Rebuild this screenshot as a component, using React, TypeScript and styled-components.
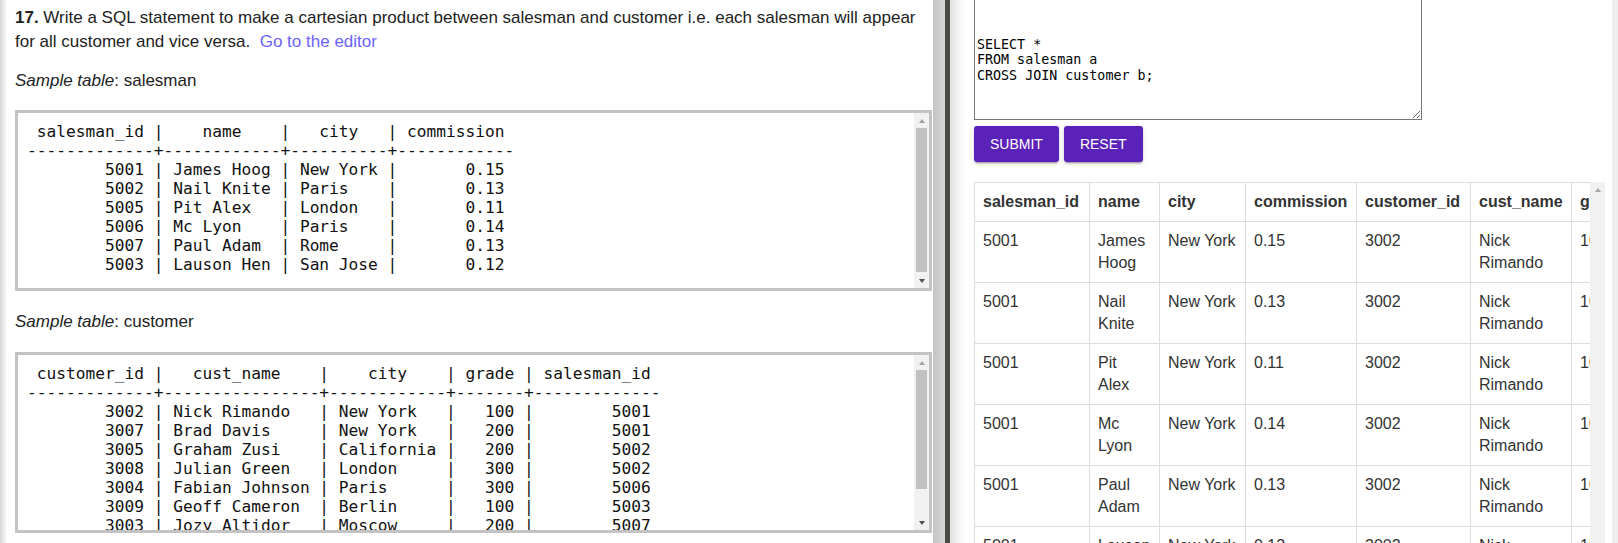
import React from 'react';
import styled, { createGlobalStyle } from 'styled-components';

const GlobalStyle = createGlobalStyle`
  html, body {
    margin: 0;
    padding: 0;
    background: #fff;
    overflow: hidden;
  }
  body {
    font-family: "Liberation Sans", Arial, sans-serif;
  }
`;

const Page = styled.div`
  display: flex;
  width: 1618px;
  height: 543px;
  overflow: hidden;
`;

/* ---------- left: exercise text ---------- */

const LeftPanel = styled.section`
  flex: 0 0 933px;
  box-sizing: border-box;
  padding: 6px 1px 0 15px;
  background: linear-gradient(to right, #d6d6d6 0, #ececec 4px, #ffffff 7px);
  color: #222;
  font-size: 17px;
  line-height: 24px;
  overflow: hidden;
`;

const Paragraph = styled.p<{ $top: number }>`
  margin: ${(p) => p.$top}px 0 0;
`;

const Strong = styled.strong`
  font-weight: 700;
`;

const EditorLink = styled.a`
  color: #6c63ff;
  text-decoration: none;
`;

const CodeBox = styled.div<{ $top: number }>`
  margin-top: ${(p) => p.$top}px;
  height: 181px;
  box-sizing: border-box;
  border: 3px solid #c3c3c3;
  background: #fff;
  display: flex;
`;

const CodeText = styled.pre`
  flex: 1;
  min-width: 0;
  margin: 0;
  padding: 9px 9px 0;
  overflow: hidden;
  font-family: "DejaVu Sans Mono", monospace;
  font-size: 16.2px;
  line-height: 19px;
  color: #111;
  white-space: pre;
`;

/* ---------- drawn classic scrollbar ---------- */

const ScrollBar = styled.div`
  flex: 0 0 15px;
  display: flex;
  flex-direction: column;
  background: #f1f1f1;
`;

const ScrollButton = styled.div`
  flex: 0 0 15px;
  display: flex;
  align-items: center;
  justify-content: center;
`;

const Arrow = styled.span<{ $dir: 'up' | 'down'; $dim?: boolean }>`
  width: 0;
  height: 0;
  border-left: 3.5px solid transparent;
  border-right: 3.5px solid transparent;
  ${(p) =>
    p.$dir === 'up'
      ? `border-bottom: 4px solid ${p.$dim ? '#a3a3a3' : '#505050'};`
      : `border-top: 4px solid ${p.$dim ? '#a3a3a3' : '#505050'};`}
`;

const ScrollTrack = styled.div`
  flex: 1;
  min-height: 0;
  padding: 0 2px;
  display: flex;
  flex-direction: column;
`;

const Thumb = styled.div<{ $ratio: number }>`
  height: ${(p) => p.$ratio * 100}%;
  background: #c1c1c1;
`;

function FakeScrollbar({ ratio, showDown = true }: { ratio: number; showDown?: boolean }) {
  return (
    <ScrollBar>
      <ScrollButton>
        <Arrow $dir="up" $dim />
      </ScrollButton>
      <ScrollTrack>{ratio > 0 && <Thumb $ratio={ratio} />}</ScrollTrack>
      {showDown && (
        <ScrollButton>
          <Arrow $dir="down" />
        </ScrollButton>
      )}
    </ScrollBar>
  );
}

/* ---------- splitter ---------- */

const Splitter = styled.div`
  flex: 0 0 17px;
  background: linear-gradient(
    to right,
    #c4c4c4 0,
    #d6d6d6 12px,
    #4b4b46 12px,
    #4b4b46 17px
  );
`;

/* ---------- right: editor + result ---------- */

const RightPanel = styled.section`
  flex: 1;
  min-width: 0;
  display: flex;
  background: linear-gradient(to right, #e2e2e2 0, #f5f5f5 9px, #ffffff 16px);
`;

const RightContent = styled.div`
  flex: 1;
  min-width: 0;
  padding: 0 7px 0 24px;
  display: flex;
  flex-direction: column;
  overflow: hidden;
`;

const RightEdge = styled.div`
  flex: 0 0 6px;
  background: #eeeeee;
`;

const Editor = styled.textarea`
  display: block;
  flex: 0 0 auto;
  width: 448px;
  height: 120px;
  box-sizing: border-box;
  margin: 0;
  border: 1px solid #767676;
  border-top: none;
  padding: 36.5px 2px 2px;
  font-family: "DejaVu Sans Mono", monospace;
  font-size: 13.33px;
  line-height: 15.5px;
  color: #000;
  background: #fff;
  outline: none;
  resize: both;
`;

const ButtonRow = styled.div`
  flex: 0 0 auto;
  display: flex;
  gap: 5px;
  margin-top: 6px;
`;

const ActionButton = styled.button`
  height: 36px;
  padding: 0 16px;
  border: none;
  border-radius: 3px;
  background: #5a22b8;
  color: #fff;
  font-family: "Liberation Sans", Arial, sans-serif;
  font-size: 14px;
  text-transform: uppercase;
  box-shadow: 0 2px 2px 0 rgba(0, 0, 0, 0.14), 0 3px 1px -2px rgba(0, 0, 0, 0.2),
    0 1px 5px 0 rgba(0, 0, 0, 0.12);
  cursor: pointer;
`;

const ResultBox = styled.div`
  margin-top: 20px;
  height: 620px;
  flex: 0 0 auto;
  display: flex;
`;

const ResultViewport = styled.div`
  flex: 1;
  min-width: 0;
  overflow: hidden;
`;

const ResultTable = styled.table`
  border-collapse: collapse;
  table-layout: fixed;
  width: 817px;
  font-family: "Liberation Sans", Arial, sans-serif;
  font-size: 16px;
  line-height: 22px;
  color: #333;
  border: 1px solid #ddd;
`;

const Col = styled.col<{ $w: number }>`
  width: ${(p) => p.$w}px;
`;

const HeadCell = styled.th`
  border: 1px solid #ddd;
  padding: 8px;
  text-align: left;
  vertical-align: bottom;
  font-weight: 700;
  white-space: nowrap;
  overflow: hidden;
`;

const Cell = styled.td<{ $nowrap?: boolean }>`
  border: 1px solid #ddd;
  padding: 8px;
  text-align: left;
  vertical-align: top;
  ${(p) => (p.$nowrap ? 'white-space: nowrap;' : '')}
`;

const salesmanTable = ` salesman_id |    name    |   city   | commission 
-------------+------------+----------+------------
        5001 | James Hoog | New York |       0.15
        5002 | Nail Knite | Paris    |       0.13
        5005 | Pit Alex   | London   |       0.11
        5006 | Mc Lyon    | Paris    |       0.14
        5007 | Paul Adam  | Rome     |       0.13
        5003 | Lauson Hen | San Jose |       0.12`;

const customerTable = ` customer_id |   cust_name    |    city    | grade | salesman_id 
-------------+----------------+------------+-------+-------------
        3002 | Nick Rimando   | New York   |   100 |        5001
        3007 | Brad Davis     | New York   |   200 |        5001
        3005 | Graham Zusi    | California |   200 |        5002
        3008 | Julian Green   | London     |   300 |        5002
        3004 | Fabian Johnson | Paris      |   300 |        5006
        3009 | Geoff Cameron  | Berlin     |   100 |        5003
        3003 | Jozy Altidor   | Moscow     |   200 |        5007
        3001 | Brad Guzan     | London     |       |        5005`;

const columns = [
  { name: 'salesman_id', w: 115 },
  { name: 'name', w: 70 },
  { name: 'city', w: 86 },
  { name: 'commission', w: 111 },
  { name: 'customer_id', w: 114 },
  { name: 'cust_name', w: 101 },
  { name: 'grade', w: 90 },
  { name: 'salesman_id', w: 130 },
];

const rows: string[][] = [
  ['5001', 'James Hoog', 'New York', '0.15', '3002', 'Nick Rimando', '100', '5001'],
  ['5001', 'Nail Knite', 'New York', '0.13', '3002', 'Nick Rimando', '100', '5001'],
  ['5001', 'Pit Alex', 'New York', '0.11', '3002', 'Nick Rimando', '100', '5001'],
  ['5001', 'Mc Lyon', 'New York', '0.14', '3002', 'Nick Rimando', '100', '5001'],
  ['5001', 'Paul Adam', 'New York', '0.13', '3002', 'Nick Rimando', '100', '5001'],
  ['5001', 'Lauson Hen', 'New York', '0.12', '3002', 'Nick Rimando', '100', '5001'],
];

export default function App() {
  return (
    <>
      <GlobalStyle />
      <Page>
        <LeftPanel>
          <Paragraph $top={0}>
            <Strong>17.</Strong> Write a SQL statement to make a cartesian product between salesman
            and customer i.e. each salesman will appear for all customer and vice versa.&nbsp;{' '}
            <EditorLink href="#">Go to the editor</EditorLink>
          </Paragraph>
          <Paragraph $top={15}>
            <em>Sample table</em>: salesman
          </Paragraph>
          <CodeBox $top={17}>
            <CodeText>{salesmanTable}</CodeText>
            <FakeScrollbar ratio={0.99} />
          </CodeBox>
          <Paragraph $top={19}>
            <em>Sample table</em>: customer
          </Paragraph>
          <CodeBox $top={18}>
            <CodeText>{customerTable}</CodeText>
            <FakeScrollbar ratio={0.82} />
          </CodeBox>
        </LeftPanel>
        <Splitter />
        <RightPanel>
          <RightContent>
            <Editor
              readOnly
              spellCheck={false}
              defaultValue={'SELECT *\nFROM salesman a\nCROSS JOIN customer b;'}
            />
            <ButtonRow>
              <ActionButton type="button">Submit</ActionButton>
              <ActionButton type="button">Reset</ActionButton>
            </ButtonRow>
            <ResultBox>
              <ResultViewport>
                <ResultTable>
                  <colgroup>
                    {columns.map((c, i) => (
                      <Col key={i} $w={c.w} />
                    ))}
                  </colgroup>
                  <thead>
                    <tr>
                      {columns.map((c, i) => (
                        <HeadCell key={i}>{c.name}</HeadCell>
                      ))}
                    </tr>
                  </thead>
                  <tbody>
                    {rows.map((r, ri) => (
                      <tr key={ri}>
                        {r.map((v, ci) => (
                          <Cell key={ci} $nowrap={ci === 2}>
                            {v}
                          </Cell>
                        ))}
                      </tr>
                    ))}
                  </tbody>
                </ResultTable>
              </ResultViewport>
              <FakeScrollbar ratio={0} showDown={false} />
            </ResultBox>
          </RightContent>
          <RightEdge />
        </RightPanel>
      </Page>
    </>
  );
}
